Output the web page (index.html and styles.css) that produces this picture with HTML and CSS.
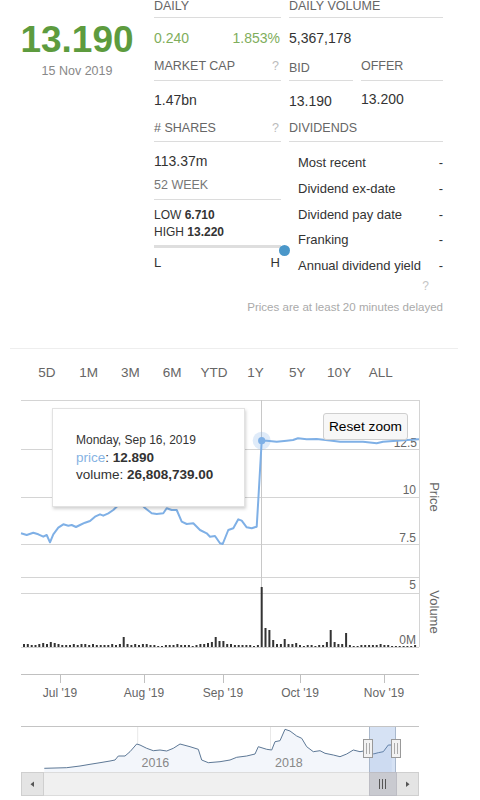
FILE: index.html
```html
<!DOCTYPE html>
<html>
<head>
<meta charset="utf-8">
<link rel="stylesheet" href="styles.css">
</head>
<body>
<div class="top">
  <div class="quote">
    <div class="price">13.190</div>
    <div class="date">15 Nov 2019</div>
  </div>
  <div class="stats">
    <div class="cell lbl r1">DAILY</div>
    <div class="cell lbl r1 span2">DAILY VOLUME</div>

    <div class="cell r2 pair green"><span>0.240</span><span>1.853%</span></div>
    <div class="cell r2 span2">5,367,178</div>

    <div class="cell lbl r3"><span>MARKET CAP</span><span class="q">?</span></div>
    <div class="cell lbl r3 bid">BID</div>
    <div class="cell lbl r3">OFFER</div>

    <div class="cell r4">1.47bn</div>
    <div class="cell r4 bidv">13.190</div>
    <div class="cell r4 offv">13.200</div>

    <div class="cell lbl r5"><span># SHARES</span><span class="q">?</span></div>
    <div class="cell lbl r5 span2">DIVIDENDS</div>

    <div class="cell week">
      <div class="shares">113.37m</div>
      <div class="lbl wk">52 WEEK</div>
      <div class="lowhigh">
        <div>LOW <b>6.710</b></div>
        <div>HIGH <b>13.220</b></div>
      </div>
      <div class="slider"><div class="track"></div><div class="knob"></div></div>
      <div class="lh"><span>L</span><span>H</span></div>
    </div>
    <div class="cell span2 divs">
      <div class="drow"><span>Most recent</span><span>-</span></div>
      <div class="drow"><span>Dividend ex-date</span><span>-</span></div>
      <div class="drow"><span>Dividend pay date</span><span>-</span></div>
      <div class="drow"><span>Franking</span><span>-</span></div>
      <div class="drow"><span>Annual dividend yield</span><span>-</span></div>
      <div class="qq">?</div>
      <div class="note"><span>Prices are at least 20 minutes delayed</span></div>
    </div>
  </div>
</div>
<div class="sep"></div>
<div class="ranges">
  <span>5D</span><span>1M</span><span>3M</span><span>6M</span><span>YTD</span><span>1Y</span><span>5Y</span><span>10Y</span><span>ALL</span>
</div>
<div class="chart">
  <svg class="plot" width="480" height="405" viewBox="0 395 480 405" xmlns="http://www.w3.org/2000/svg">
    <g stroke="#d4d4d4" stroke-width="1" fill="none">
      <path d="M21 400.5H419M21 449.5H419M21 497.5H419M21 544.5H419M21 577.5H419M21 593.5H419M21 647.5H419"/>
      <path d="M419.5 400V647"/>
      <path d="M261.5 400V647" stroke="#c8c8c8"/>
    </g>
    <g stroke="#c0c0c0" fill="none">
      <path d="M21 674.5H419"/>
      <path d="M60.5 675V683M144.5 675V683M223.5 675V683M300.5 675V683M384.5 675V683"/>
    </g>
    <g class="axis" font-size="12" fill="#666" text-anchor="end">
      <text x="417" y="447">12.5</text>
      <text x="416" y="494">10</text>
      <text x="416" y="542">7.5</text>
      <text x="416" y="589">5</text>
      <text x="416" y="644">0M</text>
    </g>
    <g class="axis" font-size="12" fill="#666" text-anchor="middle">
      <text x="60" y="697">Jul '19</text>
      <text x="144" y="697">Aug '19</text>
      <text x="223" y="697">Sep '19</text>
      <text x="300" y="697">Oct '19</text>
      <text x="384" y="697">Nov '19</text>
    </g>
    <g class="axis" font-size="13" fill="#666" text-anchor="middle">
      <text transform="translate(430 497) rotate(90)">Price</text>
      <text transform="translate(430 612) rotate(90)">Volume</text>
    </g>
    <path fill="none" stroke="#7fb0e6" stroke-width="2" stroke-linejoin="round" d="M21 533.3L26.7 535L33.3 532.7L38.3 534.3L43.3 536.7L46.7 535L50 542.3L53.3 534.3L58.3 527.7L63.3 524.3L68.3 525.7L71.7 525L76 527L80 525L85 522.7L90 521L95 516.7L100 514.3L103.3 515.7L108.3 513.3L113.3 510L116.7 506.7L125 500L135 498L145 508L151.7 513.3L156.7 514L163.3 513.3L166.7 508.3L171.7 510L176.7 510L181.7 521.7L186.7 524L193.3 523.3L200 530L206.7 533.3L210 536.7L215 536L220 543.3L222.7 544L228.3 530L233.3 528.3L238.3 519.3L241.7 520.7L246.7 527.3L251.7 528.3L256.7 526.7L258.3 500L261.7 440.7L266.7 440.7L276.7 441.7L286.7 440.7L293 440L298 438.3L306.7 439.3L316.7 439L330 440.5L340 441.7L363 441.7L376.7 443.3L383 441.7L400 440.5L419 439.3"/>
    <circle cx="261.7" cy="440.7" r="9" fill="#7fb0e6" opacity="0.25"/>
    <circle cx="261.7" cy="440.7" r="3.6" fill="#7fb0e6"/>
    <path fill="none" stroke="#333" stroke-width="2" d="M24 647V644M27.8 647V644M31.7 647V645M35.5 647V645M39.3 647V644M43.2 647V643M47 647V644M50.8 647V642M54.7 647V643M58.5 647V644M62.3 647V645M66.2 647V645M70 647V645M73.8 647V644M77.7 647V645M81.5 647V644M85.3 647V644M89.2 647V645M93 647V644M96.8 647V645M100.7 647V645M104.5 647V645M108.3 647V645M112.2 647V644M116 647V645M119.9 647V644M123.7 647V637M127.5 647V644M131.4 647V645M135.2 647V644M139 647V645M142.9 647V644M146.7 647V644M150.5 647V645M154.4 647V645M158.2 647V646M162 647V646M165.9 647V645M169.7 647V645M173.5 647V645M177.4 647V644M181.2 647V645M185 647V645M188.9 647V645M192.7 647V646M196.5 647V645M200.4 647V644M204.2 647V644M208 647V643M211.9 647V642M215.7 647V637M219.5 647V641M223.4 647V641M227.2 647V644M231 647V644M234.9 647V645M238.7 647V645M242.5 647V645M246.4 647V645M250.2 647V645M254 647V646M257.9 647V645M261.7 647V587M265.5 647V628M269.4 647V630M273.2 647V640M277 647V644M280.9 647V644M284.7 647V639M288.5 647V644M292.4 647V644M296.2 647V643M300 647V645M303.9 647V646M307.7 647V645M311.6 647V645M315.4 647V646M319.2 647V645M323.1 647V645M326.9 647V642M330.7 647V630M334.6 647V642M338.4 647V644M342.2 647V644M346.1 647V633M349.9 647V645M353.7 647V646M357.6 647V646M361.4 647V645M365.2 647V645M369.1 647V645M372.9 647V645M376.7 647V645M380.6 647V644M384.4 647V645M388.2 647V645M392.1 647V646M395.9 647V646M399.7 647V646M403.6 647V646M407.4 647V646M411.2 647V646M415.1 647V645"/>

    <!-- navigator -->
    <path d="M137.7 726V772M270.5 726V772" stroke="#e8e8e8" fill="none"/>
    <path fill="#f3f6fb" stroke="none" d="M44.3 768.3L66.7 767.7L80 766L90 764.3L100 762.7L110 761L115 760L118.3 756L125 756L130 751.7L136.7 744L140 745L146.7 748.3L153.3 750.7L160 750L166.7 751L173.3 748.3L180 744L190 746.7L198.3 749.3L201.7 760L208.3 762.7L220 761.7L230 760L236.7 757.3L246.7 756L255 754L258.3 746.7L266.7 749.3L271.7 750L275 741.7L280 740.7L285 729.3L290 731L296.7 736L301.7 738.3L306.7 746.7L313.3 751.7L320 750.7L325 753.3L333.3 755L340 756.7L346.7 754L353.3 750L360 751.7L365 750.7L370 750.7L373.3 754L378.3 752.7L383.3 751.7L388.3 745L391.7 745V772H44.3Z"/>
    <g class="axis" font-size="12.5" fill="#888">
      <text x="141.5" y="767">2016</text>
      <text x="275" y="767">2018</text>
    </g>
    <path fill="none" stroke="#5d7896" stroke-width="1" stroke-linejoin="round" d="M44.3 768.3L66.7 767.7L80 766L90 764.3L100 762.7L110 761L115 760L118.3 756L125 756L130 751.7L136.7 744L140 745L146.7 748.3L153.3 750.7L160 750L166.7 751L173.3 748.3L180 744L190 746.7L198.3 749.3L201.7 760L208.3 762.7L220 761.7L230 760L236.7 757.3L246.7 756L255 754L258.3 746.7L266.7 749.3L271.7 750L275 741.7L280 740.7L285 729.3L290 731L296.7 736L301.7 738.3L306.7 746.7L313.3 751.7L320 750.7L325 753.3L333.3 755L340 756.7L346.7 754L353.3 750L360 751.7L365 750.7L370 750.7L373.3 754L378.3 752.7L383.3 751.7L388.3 745L391.7 745"/>
    <rect x="369.3" y="726" width="26.7" height="46" fill="#6b97d6" opacity="0.28"/>
    <path d="M369.5 726V772M395.5 726V772" stroke="#a9b8cc" fill="none"/>
    <path d="M21 726.5H419" stroke="#c4c4c4" fill="none"/>
    <!-- scrollbar -->
    <rect x="21.5" y="772.5" width="397" height="23" fill="#f0f0f0" stroke="#dcdcdc"/>
    <rect x="21.5" y="772.5" width="22" height="23" fill="#e4e4e4" stroke="#cfcfcf"/>
    <rect x="396.5" y="772.5" width="22" height="23" fill="#e4e4e4" stroke="#cfcfcf"/>
    <rect x="369.5" y="772.5" width="27" height="23" fill="#c9cad0" stroke="#bdbdc4"/>
    <path d="M34 781.5V787L30.5 784.2Z" fill="#555"/>
    <path d="M406 781.5V787L409.5 784.2Z" fill="#555"/>
    <path d="M379.5 779V789M382.5 779V789M385.5 779V789" stroke="#555" fill="none"/>
    <!-- handles -->
    <rect x="363.5" y="739.5" width="9" height="18" fill="#f2f2f2" stroke="#999"/>
    <path d="M366.5 743V754M369.5 743V754" stroke="#aaa" fill="none"/>
    <rect x="391.5" y="739.5" width="9" height="18" fill="#f2f2f2" stroke="#999"/>
    <path d="M394.5 743V754M397.5 743V754" stroke="#aaa" fill="none"/>
  </svg>
  <div class="tip">
    <div class="d">Monday, Sep 16, 2019</div>
    <div><span class="p">price</span>: <b>12.890</b></div>
    <div>volume: <b>26,808,739.00</b></div>
  </div>
  <div class="reset">Reset zoom</div>
</div>
</body>
</html>
```
FILE: styles.css
```css
* { box-sizing: border-box; }
html, body { margin: 0; padding: 0; }
body {
  width: 480px;
  height: 800px;
  overflow: hidden;
  background: #fff;
  color: #333;
  font-family: "Liberation Sans", Arial, sans-serif;
}
.top { display: flex; }
.quote { width: 154px; text-align: center; }
.price {
  font-size: 37px;
  font-weight: bold;
  line-height: 44px;
  padding-top: 18px;
  color: #5d9b3e;
}
.date { font-size: 12.5px; line-height: 14px; margin-top: 2px; color: #888; }

.stats {
  display: grid;
  grid-template-columns: 127px 64px 82px;
  column-gap: 8px;
  align-items: start;
}
.cell { font-size: 12.5px; line-height: 14px; }
.span2 { grid-column: span 2; }
.lbl {
  color: #666;
  border-bottom: 1px solid #dcdcdc;
  display: flex;
  justify-content: space-between;
}
.q { color: #bbb; padding-right: 2px; }
.r1 { height: 18px; line-height: 12px; }
.r2 { height: 34px; padding-top: 13px; font-size: 14px; }
.r3 { height: 29px; padding-top: 7px; }
.bid { padding-top: 9px; }
.r4 { height: 34px; padding-top: 12px; font-size: 14px; }
.bidv { padding-top: 13px; }
.offv { padding-top: 11px; }
.r5 { height: 27px; padding-top: 6px; }
.pair { display: flex; justify-content: space-between; padding-right: 1px; }
.green { color: #7fae5c; }

.shares { height: 30px; padding-top: 12px; font-size: 14px; }
.wk { height: 28px; padding-top: 6px; color: #777; }
.lowhigh { padding-top: 7px; font-size: 12px; line-height: 17px; color: #333; }
.slider { position: relative; height: 11px; }
.track { margin-top: 4px; height: 3px; background: #dedede; }
.knob {
  position: absolute;
  right: -8.5px;
  top: 0;
  width: 11px;
  height: 11px;
  border-radius: 50%;
  background: #4a97c9;
}
.lh {
  display: flex;
  justify-content: space-between;
  font-size: 13px;
  padding-right: 1px;
}

.divs { padding-top: 8px; }
.drow {
  display: flex;
  justify-content: space-between;
  height: 25.75px;
  line-height: 25.75px;
  padding-left: 9px;
  font-size: 13px;
  color: #333;
}
.qq { text-align: right; padding-right: 14px; color: #c4c4c4; font-size: 12px; }
.note {
  display: flex;
  justify-content: flex-end;
  white-space: nowrap;
  color: #aaa;
  font-size: 11.55px;
  margin-top: 7px;
}

.sep { margin: 34px 22px 0 10px; border-top: 1px solid #eee; }
.ranges { display: flex; height: 46px; padding: 17px 0 0 26px; }
.ranges span {
  width: 41.75px;
  text-align: center;
  font-size: 13.5px;
  line-height: 14px;
  color: #666;
}

.chart { position: relative; height: 405px; }
.plot { display: block; }
.axis { font-family: "Liberation Sans", Arial, sans-serif; }
.tip {
  position: absolute;
  left: 52px;
  top: 13px;
  width: 193px;
  height: 99px;
  background: #fff;
  border: 1px solid #e2e2e2;
  box-shadow: 1px 2px 3px rgba(0, 0, 0, 0.18);
  padding: 23px 0 0 23px;
  font-size: 13.5px;
  line-height: 17px;
  color: #333;
}
.tip .d { font-size: 12px; }
.tip .p { color: #86b3e3; }
.reset {
  position: absolute;
  left: 323px;
  top: 18px;
  width: 85px;
  height: 27px;
  border: 1px solid #cfcfcf;
  border-radius: 3px;
  background: #f7f7f7;
  font-size: 13.7px;
  line-height: 25px;
  text-align: center;
  color: #000;
}
```
